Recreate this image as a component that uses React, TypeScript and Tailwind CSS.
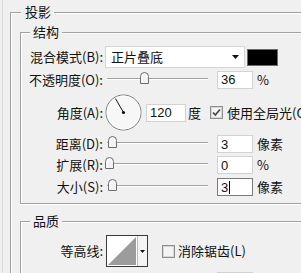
import React from "react";

function Slider({ pos }: { pos: number }) {
  return (
    <div className="relative ml-[2px] h-full w-[103px] shrink-0">
      <div className="absolute left-[2px] right-0 top-[calc(50%-2px)] h-[2px] border-t border-[#a3a3a3] bg-white" />
      <svg
        className="absolute top-[calc(50%-8px)]"
        style={{ left: pos }}
        width="9"
        height="12"
        viewBox="0 0 9 12"
      >
        <path d="M0.5 11.5 V4.5 A4 4 0 0 1 8.5 4.5 V11.5 Z" fill="#f2f2f2" stroke="#6e6e6e" />
        <path d="M2 10.5 V5 A2.5 2.5 0 0 1 7 5" fill="none" stroke="#ffffff" />
      </svg>
    </div>
  );
}

function NumBox({ value, focused }: { value: string; focused?: boolean }) {
  return (
    <div
      className={
        "ml-[9px] flex h-[18px] w-[36px] shrink-0 items-center bg-white pl-[3px] font-['Liberation_Sans',sans-serif] text-[13px] leading-none " +
        (focused ? "border border-[#7a7a7a]" : "border border-[#d2d2d2]")
      }
    >
      {value}
      {focused && <span className="ml-[1px] h-[13px] w-px bg-black" />}
    </div>
  );
}

function Label({ text, w = "w-[82px]" }: { text: string; w?: string }) {
  return <div className={w + " shrink-0 text-right"}>{text}</div>;
}

function SliderRow({
  label,
  pos,
  value,
  unit,
  focused,
  cls,
}: {
  label: string;
  pos: number;
  value: string;
  unit: string;
  focused?: boolean;
  cls: string;
}) {
  return (
    <div className={"flex items-center " + cls}>
      <Label text={label} />
      <Slider pos={pos} />
      <NumBox value={value} focused={focused} />
      <div className="ml-[4px]">{unit}</div>
    </div>
  );
}

function Dial() {
  return (
    <svg className="ml-[2px] shrink-0" width="37" height="37" viewBox="0 0 37 37">
      <circle cx="18.5" cy="18.5" r="17.5" fill="#f7f7f7" stroke="#777" />
      <circle cx="18.5" cy="18.5" r="16.5" fill="none" stroke="#fff" />
      <line x1="18.5" y1="18.5" x2="10.5" y2="4.6" stroke="#111" strokeWidth="1" />
      <circle cx="18.5" cy="18.5" r="1.6" fill="#111" />
    </svg>
  );
}

function CheckBox({ checked, cls }: { checked?: boolean; cls: string }) {
  return (
    <svg className={"shrink-0 " + cls} width="13" height="13" viewBox="0 0 13 13">
      <rect x="0.5" y="0.5" width="12" height="12" fill="#e9e9e9" stroke="#8e8e8e" />
      <rect x="1.5" y="1.5" width="10" height="10" fill="#f4f4f4" stroke="#d6d6d6" />
      {checked && <path d="M3 6.5 L5.3 9 L10 3.5" fill="none" stroke="#4a4a4a" strokeWidth="1.8" />}
    </svg>
  );
}

export default function App() {
  const legend = "bg-[#f0f0f0] leading-[16px]";
  return (
    <div className="h-[273px] w-[301px] overflow-hidden bg-[#f0f0f0] pl-[2px] font-['Noto_Sans_CJK_SC',sans-serif] text-[13px] leading-[16px] text-[#111]">
      <div className="h-full border-l border-[#dadada] pl-[7px] pt-[4px]">
        <fieldset className="w-[330px] border-l border-t border-[#a0a0a0] pl-[9px] shadow-[inset_1px_1px_0_#fff]">
          <legend className={legend + " ml-[1px] pl-[4px] pr-[3px]"}>投影</legend>

          <fieldset className="mt-[4px] border-b border-l border-t border-[#a0a0a0] pb-[7px] shadow-[inset_1px_1px_0_#fff,0_1px_0_#fff]">
            <legend className={legend + " ml-[9px] px-[3px]"}>结构</legend>

            <div className="mt-[6px] flex h-[22px] items-center">
              <Label text="混合模式(B):" />
              <div className="ml-[2px] flex h-full w-[140px] shrink-0 items-center border border-[#d6d6d6] bg-white pl-[5px]">
                <span className="flex-1">正片叠底</span>
                <svg className="mr-[5px]" width="7" height="4" viewBox="0 0 7 4">
                  <path d="M0 0 H7 L3.5 4 Z" fill="#111" />
                </svg>
              </div>
              <div className="ml-[2px] h-[17px] w-[31px] shrink-0 border border-[#6a6a6a] bg-black" />
            </div>

            <SliderRow label="不透明度(O):" pos={35} value="36" unit="%" cls="mt-[2px] h-[19px]" />

            <div className="mt-[5px] flex h-[37px] items-center">
              <Label text="角度(A):" />
              <Dial />
              <div className="ml-[4px] flex h-[18px] w-[40px] shrink-0 items-center border border-[#d2d2d2] bg-white pl-[3px] font-['Liberation_Sans',sans-serif] text-[13px] leading-none">
                120
              </div>
              <div className="ml-[2px]">度</div>
              <CheckBox checked cls="ml-[9px]" />
              <div className="ml-[4px] whitespace-nowrap">使用全局光(G)</div>
            </div>

            <SliderRow label="距离(D):" pos={3} value="3" unit="像素" cls="mt-[4px] h-[18px]" />
            <SliderRow label="扩展(R):" pos={0} value="0" unit="%" cls="mt-[3px] h-[18px]" />
            <SliderRow label="大小(S):" pos={3} value="3" unit="像素" focused cls="mt-[4px] h-[18px]" />
          </fieldset>

          <fieldset className="mt-[9px] border-l border-t border-[#a0a0a0] shadow-[inset_1px_1px_0_#fff]">
            <legend className={legend + " ml-[9px] px-[3px]"}>品质</legend>

            <div className="mt-[6px] flex h-[32px] items-center">
              <Label text="等高线:" w="w-[82px]" />
              <div className="ml-[3px] flex h-full w-[42px] shrink-0 border border-[#3a3a3a] bg-white">
                <svg width="30" height="30" viewBox="0 0 30 30">
                  <path d="M1 29 L29 1 V29 Z" fill="#9c9c9c" />
                </svg>
                <div className="flex flex-1 items-center justify-center border-l border-[#bdbdbd] bg-[#f4f4f4]">
                  <svg width="5" height="3" viewBox="0 0 5 3">
                    <path d="M0 0 H5 L2.5 3 Z" fill="#111" />
                  </svg>
                </div>
              </div>
              <CheckBox cls="ml-[14px]" />
              <div className="ml-[3px] whitespace-nowrap">消除锯齿(L)</div>
            </div>

            <SliderRow label="杂色(N):" pos={0} value="0" unit="%" cls="mt-[5px] h-[18px]" />
          </fieldset>
        </fieldset>
      </div>
    </div>
  );
}
